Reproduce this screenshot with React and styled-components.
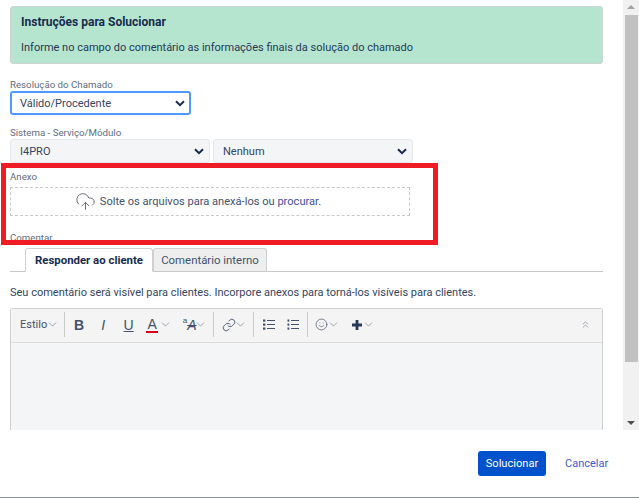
import React from "react";
import styled, { createGlobalStyle } from "styled-components";
import { CloudUpload, Smile, Link as LinkIcon, ChevronDown, ChevronsUp } from "lucide-react";

const Global = createGlobalStyle`
  html, body { margin: 0; padding: 0; background: #fff; overflow: hidden; }
  * { box-sizing: border-box; }
  body { font-family: Roboto, "Noto Sans", sans-serif; color: #172b4d; }
`;

const Page = styled.div`
  position: relative;
  width: 639px;
  height: 498px;
  display: flex;
  flex-direction: column;
  border-bottom: 1px solid #8c9196;
`;

const Scroller = styled.div`
  height: 430px;
  display: flex;
  overflow: hidden;
`;

const Content = styled.div`
  width: 623px;
  height: 430px;
  padding: 6px 20px 0 10px;
  overflow: hidden;
`;

const Bar = styled.div`
  width: 16px;
  background: #f1f1f1;
  display: flex;
  flex-direction: column;
  align-items: center;
  padding: 5px 0 5px;
`;

const Arrow = styled.div`
  width: 0;
  height: 0;
  border-left: 4px solid transparent;
  border-right: 4px solid transparent;
  ${(p) => (p.$down ? "border-top: 4px solid #505050;" : "border-bottom: 4px solid #a3a3a3;")}
`;

const Thumb = styled.div`
  width: 13px;
  height: 347px;
  margin: 6px 0 auto;
  background: #c1c1c1;
`;

const Banner = styled.div`
  height: 58px;
  background: #b5e5cf;
  border: 1px solid #cfd4d2;
  border-radius: 3px;
  padding: 8px 10px;
  font-size: 11px;
  color: #253858;
`;

const BannerTitle = styled.div`
  font-size: 12px;
  font-weight: 700;
  line-height: 15px;
  color: #172b4d;
`;

const BannerText = styled.div`
  margin-top: 10px;
  line-height: 15px;
`;

const Label = styled.div`
  font-size: 9.7px;
  line-height: 13px;
  color: #5e6c84;
  margin-top: ${(p) => p.$top}px;
  height: ${(p) => p.$h || 13}px;
`;

const Row = styled.div`
  display: flex;
  gap: 3px;
`;

const Select = styled.div`
  width: ${(p) => p.$w}px;
  height: 24px;
  display: flex;
  align-items: center;
  justify-content: space-between;
  padding: 0 ${(p) => (p.$focus ? 4 : 5)}px 0 ${(p) => (p.$focus ? 8 : 9)}px;
  font-size: 11px;
  border-radius: 3px;
  color: #344563;
  background: ${(p) => (p.$focus ? "#fff" : "#f4f5f7")};
  border: ${(p) => (p.$focus ? "2px solid #4c9aff" : "1px solid #e6e8ec")};
`;

const Drop = styled.div`
  width: 400px;
  height: 29px;
  margin-top: 1px;
  border: 1px dashed #c9c9c9;
  display: flex;
  align-items: center;
  justify-content: center;
  gap: 4px;
  font-size: 11.1px;
  color: #42526e;
  padding-right: 24px;
`;

const Link = styled.a`
  color: #3d4fa8;
`;

const Tabs = styled.div`
  height: 24px;
  padding-left: 15px;
  display: flex;
  border-bottom: 1px solid #c9c9c9;
`;

const Tab = styled.div`
  height: 24px;
  width: ${(p) => p.$w}px;
  display: flex;
  align-items: center;
  justify-content: center;
  font-size: 11.4px;
  border: 1px solid #d0d0d0;
  border-bottom: ${(p) => (p.$active ? "1px solid #fff" : "1px solid #c9c9c9")};
  border-radius: 3px 3px 0 0;
  font-weight: ${(p) => (p.$active ? 700 : 400)};
  background: ${(p) => (p.$active ? "#fff" : "#eee")};
  color: ${(p) => (p.$active ? "#172b4d" : "#42526e")};
`;

const Hint = styled.div`
  margin-top: 13px;
  height: 23px;
  font-size: 11px;
  line-height: 15px;
  color: #344563;
`;

const Editor = styled.div`
  height: 130px;
  background: #f4f5f7;
  border: 1px solid #d0d0d0;
  border-bottom: none;
  border-radius: 3px 3px 0 0;
`;

const Toolbar = styled.div`
  height: 34px;
  background: #f4f4f4;
  border-bottom: 1px solid #dcdcdc;
  display: flex;
  align-items: center;
  padding: 0 9px 2px;
  color: #42526e;
`;

const Sep = styled.div`
  width: 1px;
  height: 25px;
  background: #c9c9c9;
  margin: 0 ${(p) => p.$r}px 0 ${(p) => p.$l}px;
`;

const Tool = styled.div`
  width: ${(p) => p.$w}px;
  margin-left: ${(p) => p.$ml || 0}px;
  display: flex;
  align-items: center;
  justify-content: center;
  font-family: "Liberation Sans", sans-serif;
  font-size: 14px;
  line-height: 16px;
  font-weight: ${(p) => (p.$bold ? 700 : 400)};
  font-style: ${(p) => (p.$italic ? "italic" : "normal")};
  text-decoration: ${(p) => (p.$under ? "underline" : "none")};
`;

const ColorA = styled.span`
  display: block;
  width: 12px;
  text-align: center;
  height: 16px;
  line-height: 14px;
  border-bottom: 2px solid #d8001b;
`;

const StyleText = styled.span`
  font-size: 11px;
`;

const Sup = styled.span`
  font-size: 8px;
  line-height: 8px;
  align-self: flex-start;
`;

const Strike = styled.span`
  font-style: italic;
  text-decoration: line-through;
  text-decoration-thickness: 1px;
`;

const Spacer = styled.div`
  flex: 1;
`;

const Footer = styled.div`
  flex: 1;
  display: flex;
  align-items: center;
  justify-content: flex-end;
  padding: 0 31px 1px 0;
`;

const Primary = styled.button`
  width: 68px;
  height: 25px;
  border: none;
  border-radius: 3px;
  background: #0052cc;
  color: #fff;
  font: 11.1px Roboto, sans-serif;
`;

const Cancel = styled.a`
  width: 43px;
  margin-left: 19px;
  font-size: 11px;
  white-space: nowrap;
  color: #3b5bd0;
`;

const RedBox = styled.div`
  position: absolute;
  left: 1px;
  top: 163px;
  width: 437px;
  height: 82px;
  border: 5px solid #ee1c25;
  pointer-events: none;
`;

const Chevron = () => (
  <svg width="10" height="7" viewBox="0 0 10 7" fill="none" stroke="#172b4d" strokeWidth="2">
    <path d="M1 1.2 5 5.2l4-4" />
  </svg>
);

const Small = ({ left = 0 }) => (
  <ChevronDown size={13} strokeWidth={1.2} color="#6b778c" style={{ marginLeft: left, flexShrink: 0 }} />
);

const BulletList = ({ left = 0, numbered }) => (
  <svg width="12" height="11" viewBox="0 0 12 11" fill="#42526e" style={{ marginLeft: left, flexShrink: 0 }}>
    {[0.5, 4.5, 8.5].map((y) => (
      <rect key={y} x={numbered ? 0.5 : 0} y={y} width={numbered ? 1.8 : 2.4} height="2.2" />
    ))}
    {[1, 5, 9].map((y) => (
      <rect key={y} x="4" y={y} width="8" height="1" />
    ))}
  </svg>
);

const PlusIcon = ({ left = 0 }) => (
  <svg width="10" height="10" viewBox="0 0 10 10" fill="#253858" style={{ marginLeft: left, flexShrink: 0 }}>
    <path d="M3.6 0h2.8v3.6H10v2.8H6.4V10H3.6V6.4H0V3.6h3.6z" />
  </svg>
);

export default function App() {
  return (
    <Page>
      <Global />
      <Scroller>
        <Content>
          <Banner>
            <BannerTitle>Instruções para Solucionar</BannerTitle>
            <BannerText>Informe no campo do comentário as informações finais da solução do chamado</BannerText>
          </Banner>

          <Label $top={14} $h={13}>Resolução do Chamado</Label>
          <Select $w={181} $focus>
            Válido/Procedente
            <Chevron />
          </Select>

          <Label $top={11} $h={13}>Sistema - Serviço/Módulo</Label>
          <Row>
            <Select $w={200}>I4PRO<Chevron /></Select>
            <Select $w={200}>Nenhum<Chevron /></Select>
          </Row>

          <Label $top={7} $h={16}>Anexo</Label>
          <Drop>
            <CloudUpload size={21} strokeWidth={1} color="#5a5f66" />
            <span>Solte os arquivos para anexá-los ou <Link>procurar</Link>.</span>
          </Drop>

          <Label $top={15} $h={17}>Comentar</Label>
          <Tabs>
            <Tab $w={128} $active>Responder ao cliente</Tab>
            <Tab $w={114}>Comentário interno</Tab>
          </Tabs>
          <Hint>Seu comentário será visível para clientes. Incorpore anexos para torná-los visíveis para clientes.</Hint>

          <Editor>
            <Toolbar>
              <StyleText>Estilo</StyleText>
              <Small left={-1} />
              <Sep $l={5} $r={9} />
              <Tool $w={10} $bold>B</Tool>
              <Tool $w={8} $ml={15} $italic>I</Tool>
              <Tool $w={11} $ml={16} $under>U</Tool>
              <Tool $w={12} $ml={12}><ColorA>A</ColorA></Tool>
              <Small left={1} />
              <Tool $w={17} $ml={9}><Sup>a</Sup><Strike>A</Strike></Tool>
              <Small left={-4} />
              <Sep $l={6} $r={8} />
              <LinkIcon size={14} strokeWidth={1.5} />
              <Small left={-2} />
              <Sep $l={6} $r={9} />
              <BulletList />
              <BulletList left={12} numbered />
              <Sep $l={8} $r={7} />
              <Smile size={13} strokeWidth={1.3} />
              <Small left={-1} />
              <PlusIcon left={12} />
              <Small left={0} />
              <Spacer />
              <ChevronsUp size={11} strokeWidth={1.3} color="#6b778c" style={{ marginRight: 2 }} />
            </Toolbar>
          </Editor>
        </Content>
        <Bar>
          <Arrow />
          <Thumb />
          <Arrow $down />
        </Bar>
      </Scroller>
      <Footer>
        <Primary>Solucionar</Primary>
        <Cancel>Cancelar</Cancel>
      </Footer>
      <RedBox />
    </Page>
  );
}
